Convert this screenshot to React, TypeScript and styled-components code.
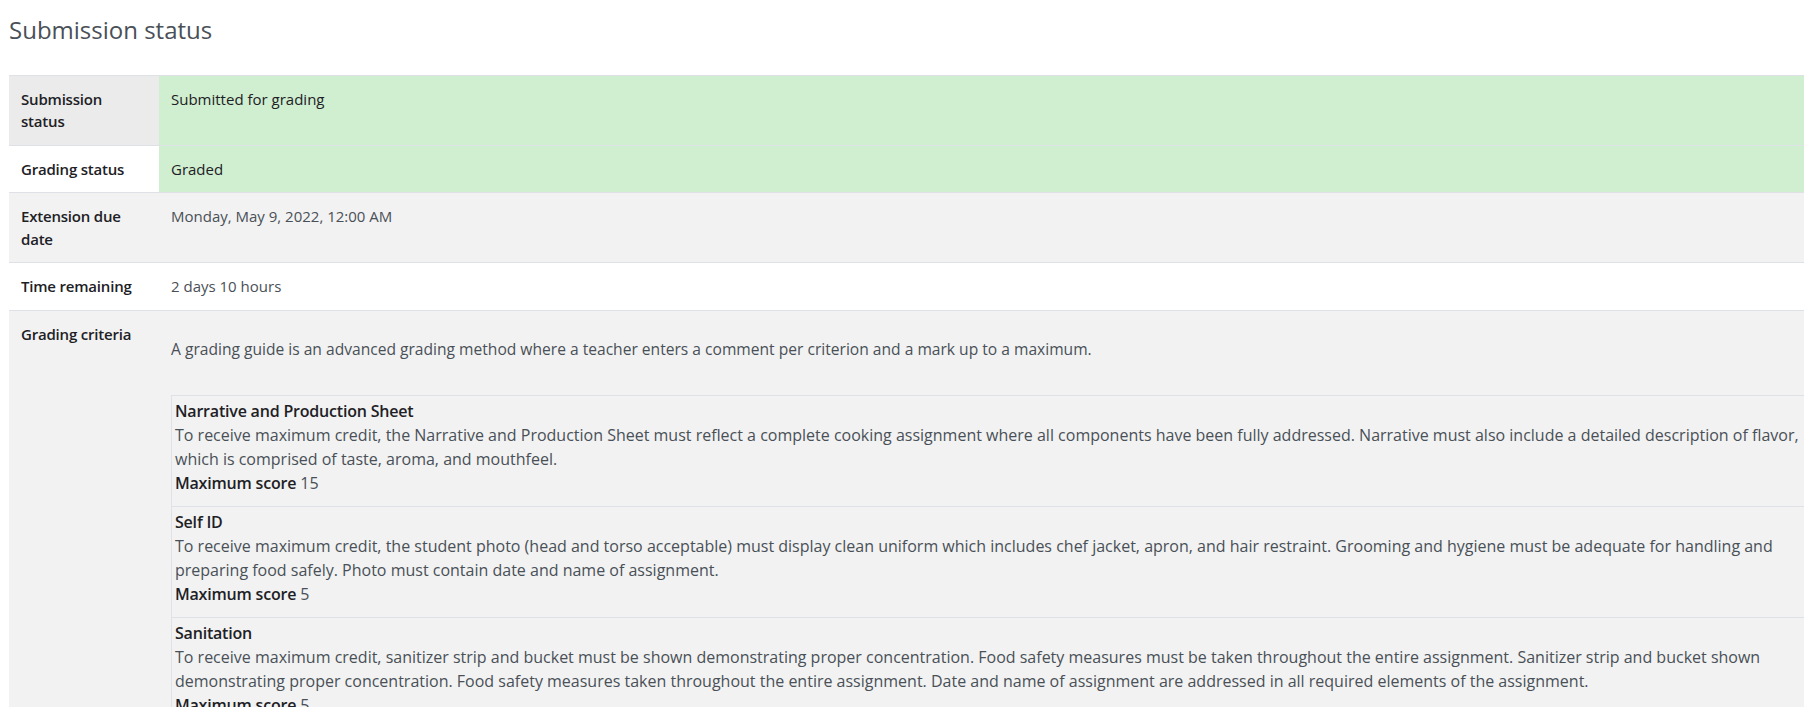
import styled, { createGlobalStyle } from 'styled-components';

const GlobalStyle = createGlobalStyle`
  html, body {
    margin: 0;
    padding: 0;
    background: #fff;
    overflow: hidden;
  }
  body {
    font-family: 'Open Sans', 'Liberation Sans', sans-serif;
    font-size: 15px;
    line-height: 1.5;
    color: #495057;
  }
`;

const Page = styled.div`
  width: 1960px;
  padding: 16px 0 0 9px;
`;

const Heading = styled.h3`
  margin: 0 0 30px 0;
  font-size: 24px;
  font-weight: 400;
  line-height: 1.2;
  color: #495057;
`;

const StatusTable = styled.div`
  display: flex;
  flex-direction: column;
`;

const Row = styled.div<{ $bg: string }>`
  display: grid;
  grid-template-columns: 150px 1fr;
  border-top: 1px solid #dee2e6;
  background: ${(props) => props.$bg};
`;

const Label = styled.div<{ $bg?: string }>`
  padding: 12px;
  font-weight: 600;
  letter-spacing: -0.2px;
  color: #1d2125;
  background: ${(props) => props.$bg || 'transparent'};
`;

const Value = styled.div<{ $status?: boolean }>`
  padding: 12px;
  color: ${(props) => (props.$status ? '#1d2125' : '#495057')};
  background: ${(props) => (props.$status ? '#d0eed0' : 'transparent')};
`;

const CriteriaCell = styled.div`
  padding: 12px 12px 0 12px;
`;

const GuideIntro = styled.p`
  margin: 15px 0 34px 0;
  font-size: 15.6px;
  color: #495057;
`;

const CriteriaBox = styled.div`
  display: flex;
  flex-direction: column;
  border-left: 1px solid #dee2e6;
  font-size: 16px;
  line-height: 24px;
`;

const Criterion = styled.div`
  border-top: 1px solid #dee2e6;
  padding: 3px 3px 11px 3px;
`;

const CriterionName = styled.div`
  font-weight: 600;
  letter-spacing: -0.2px;
  color: #1d2125;
`;

const CriterionText = styled.div`
  max-width: 1650px;
  color: #495057;
`;

const ScoreLine = styled.div`
  color: #495057;

  b {
    font-weight: 600;
    letter-spacing: -0.2px;
    color: #1d2125;
  }
`;

const criteria = [
  {
    name: 'Narrative and Production Sheet',
    text: 'To receive maximum credit, the Narrative and Production Sheet must reflect a complete cooking assignment where all components have been fully addressed. Narrative must also include a detailed description of flavor, which is comprised of taste, aroma, and mouthfeel.',
    max: 15,
  },
  {
    name: 'Self ID',
    text: 'To receive maximum credit, the student photo (head and torso acceptable) must display clean uniform which includes chef jacket, apron, and hair restraint. Grooming and hygiene must be adequate for handling and preparing food safely. Photo must contain date and name of assignment.',
    max: 5,
  },
  {
    name: 'Sanitation',
    text: 'To receive maximum credit, sanitizer strip and bucket must be shown demonstrating proper concentration. Food safety measures must be taken throughout the entire assignment. Sanitizer strip and bucket shown demonstrating proper concentration. Food safety measures taken throughout the entire assignment. Date and name of assignment are addressed in all required elements of the assignment.',
    max: 5,
  },
];

export default function App() {
  return (
    <Page>
      <GlobalStyle />
      <Heading>Submission status</Heading>
      <StatusTable>
        <Row $bg="#f2f2f2">
          <Label $bg="#ebebeb">Submission status</Label>
          <Value $status>Submitted for grading</Value>
        </Row>
        <Row $bg="#fff">
          <Label>Grading status</Label>
          <Value $status>Graded</Value>
        </Row>
        <Row $bg="#f2f2f2">
          <Label>Extension due date</Label>
          <Value>Monday, May 9, 2022, 12:00 AM</Value>
        </Row>
        <Row $bg="#fff">
          <Label>Time remaining</Label>
          <Value>2 days 10 hours</Value>
        </Row>
        <Row $bg="#f2f2f2">
          <Label>Grading criteria</Label>
          <CriteriaCell>
            <GuideIntro>
              A grading guide is an advanced grading method where a teacher enters a comment per criterion and a mark up to a maximum.
            </GuideIntro>
            <CriteriaBox>
              {criteria.map((c) => (
                <Criterion key={c.name}>
                  <CriterionName>{c.name}</CriterionName>
                  <CriterionText>{c.text}</CriterionText>
                  <ScoreLine>
                    <b>Maximum score</b> {c.max}
                  </ScoreLine>
                </Criterion>
              ))}
            </CriteriaBox>
          </CriteriaCell>
        </Row>
      </StatusTable>
    </Page>
  );
}
